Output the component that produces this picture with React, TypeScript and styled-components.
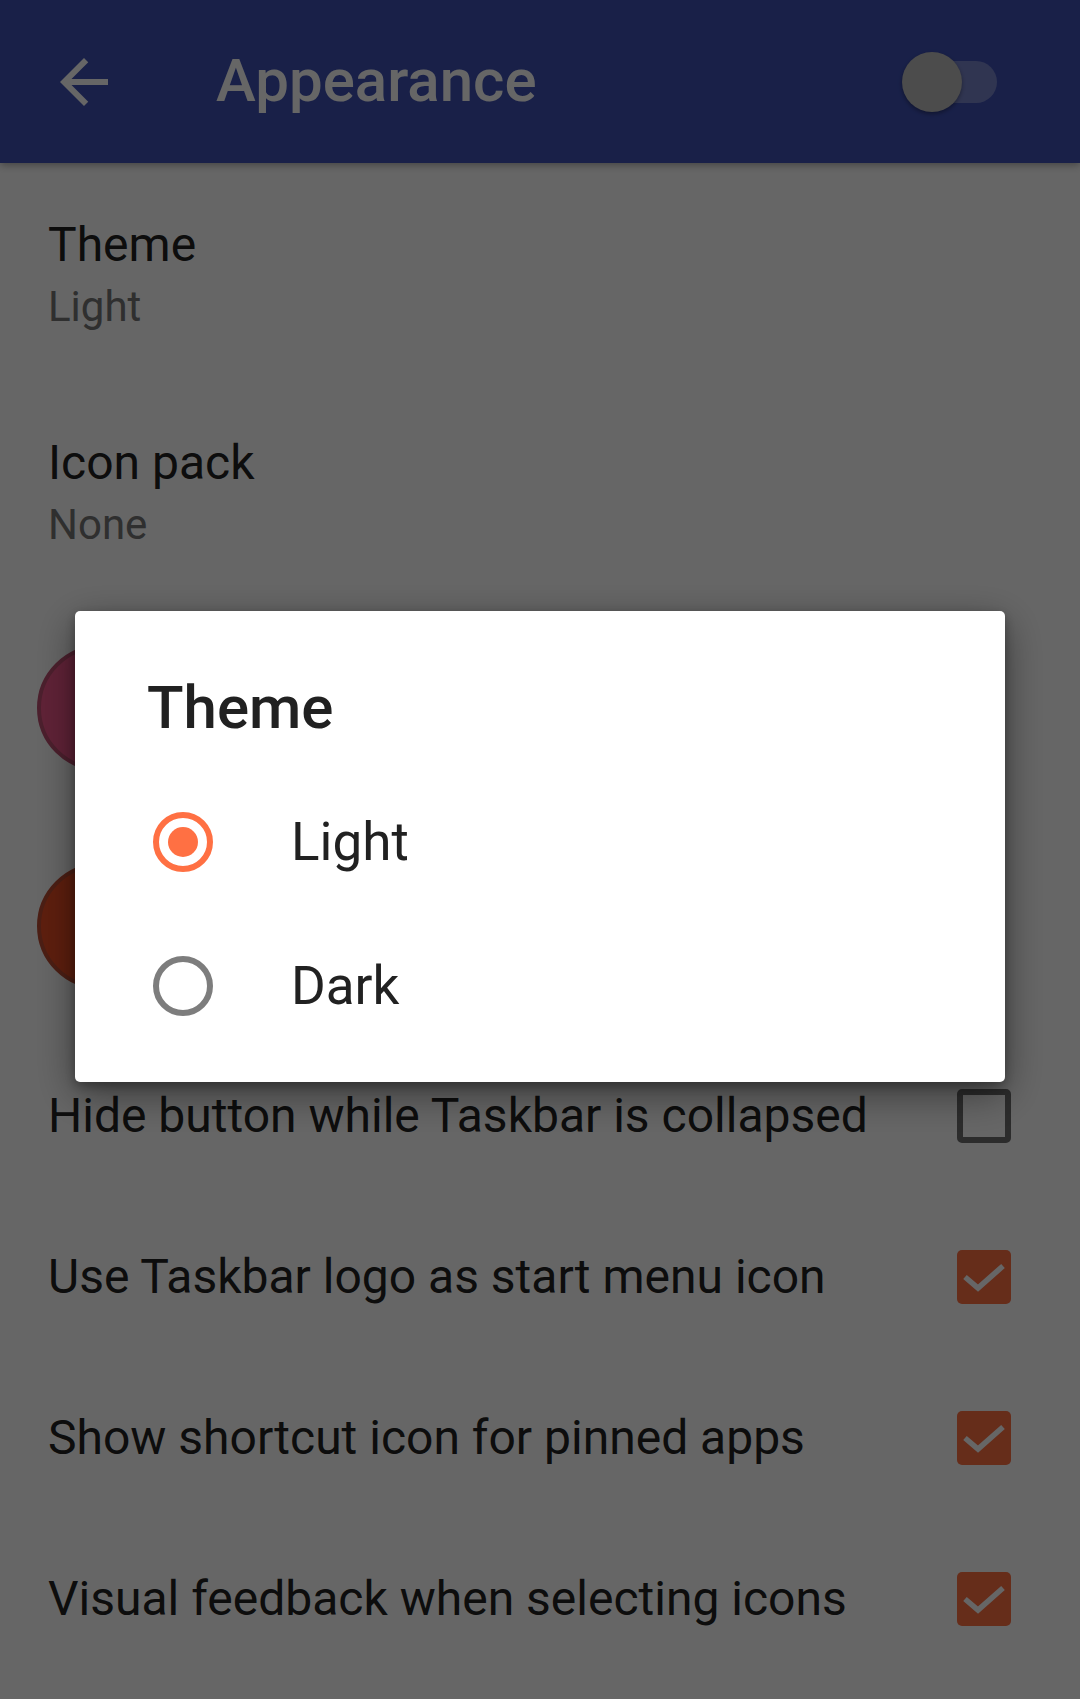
import React from "react";
import styled, { createGlobalStyle } from "styled-components";

const GlobalStyle = createGlobalStyle`
  html, body {
    margin: 0;
    padding: 0;
    background: #ffffff;
    font-family: Roboto, "Noto Sans", "Liberation Sans", sans-serif;
  }
  * { box-sizing: border-box; }
`;

const Screen = styled.div`
  position: relative;
  width: 1080px;
  min-height: 1699px;
  background: #ffffff;
  overflow: hidden;
`;

const Toolbar = styled.header`
  position: relative;
  z-index: 1;
  height: 163px;
  display: flex;
  align-items: center;
  padding: 0 83px 0 48px;
  background: #3f51b5;
  box-shadow: 0 2px 8px rgba(0, 0, 0, 0.35);
`;

const NavIcon = styled.svg`
  width: 72px;
  height: 72px;
  flex: none;
  fill: #ffffff;
`;

const ToolbarTitle = styled.h1`
  margin: 0 0 0 96px;
  font-size: 60px;
  font-weight: 500;
  color: #ffffff;
  line-height: 1.172;
`;

const SwitchWrap = styled.div`
  position: relative;
  margin-left: auto;
  width: 95px;
  height: 60px;
  display: flex;
  align-items: center;
  justify-content: flex-end;
`;

const SwitchTrack = styled.div`
  width: 87px;
  height: 42px;
  border-radius: 21px;
  background: #7985cb;
`;

const SwitchThumb = styled.div`
  position: absolute;
  left: 0;
  top: 0;
  width: 60px;
  height: 60px;
  border-radius: 50%;
  background: #bdbdbd;
  box-shadow: 0 2px 4px rgba(0, 0, 0, 0.35);
`;

const List = styled.main`
  display: flex;
  flex-direction: column;
`;

const TwoLineRow = styled.div`
  height: 218px;
  padding: 54px 48px 40px;
  display: flex;
  flex-direction: column;
`;

const PrefTitle = styled.div`
  font-size: 48px;
  line-height: 56px;
  color: #212121;
  white-space: nowrap;
`;

const PrefSummary = styled.div`
  font-size: 42px;
  line-height: 68px;
  color: #757575;
`;

const ColorRow = styled.div`
  height: 218px;
  padding: 0 48px 0 37px;
  display: flex;
  align-items: center;
`;

const ColorSwatch = styled.div<{ $fill: string; $ring: string }>`
  width: 126px;
  height: 126px;
  flex: none;
  border-radius: 50%;
  background: ${(p) => p.$fill};
  border: 4px solid ${(p) => p.$ring};
`;

const CheckRow = styled.div`
  height: 161px;
  padding: 0 69px 0 48px;
  display: flex;
  align-items: center;
  justify-content: space-between;
`;

const CheckBox = styled.div<{ $checked: boolean }>`
  width: 54px;
  height: 54px;
  flex: none;
  border-radius: 5px;
  display: flex;
  align-items: center;
  justify-content: center;
  background: ${(p) => (p.$checked ? "#ff7043" : "transparent")};
  border: ${(p) => (p.$checked ? "none" : "6px solid #6e6e6e")};
`;

const CheckMark = styled.svg`
  width: 54px;
  height: 54px;
  fill: none;
  stroke: #ffffff;
  stroke-width: 5.5;
`;

const Scrim = styled.div`
  position: fixed;
  inset: 0;
  z-index: 10;
  background: rgba(0, 0, 0, 0.6);
  display: flex;
  align-items: center;
  justify-content: center;
  padding-bottom: 6px;
`;

const Dialog = styled.div`
  width: 930px;
  height: 471px;
  background: #ffffff;
  border-radius: 5px;
  box-shadow: 0 12px 40px rgba(0, 0, 0, 0.45), 0 4px 12px rgba(0, 0, 0, 0.3);
  padding: 62px 0 24px;
  display: flex;
  flex-direction: column;
`;

const DialogTitle = styled.h2`
  margin: 0 0 27px;
  padding-left: 72px;
  font-size: 60px;
  font-weight: 500;
  line-height: 70px;
  color: #212121;
`;

const Option = styled.label`
  height: 144px;
  display: flex;
  align-items: center;
  padding-left: 78px;
  gap: 78px;
  cursor: pointer;
`;

const Radio = styled.span<{ $checked: boolean }>`
  position: relative;
  width: 60px;
  height: 60px;
  flex: none;
  border-radius: 50%;
  border: 6px solid ${(p) => (p.$checked ? "#ff7043" : "#7d7d7d")};
  &::after {
    content: "";
    position: absolute;
    left: 9px;
    top: 9px;
    width: 30px;
    height: 30px;
    border-radius: 50%;
    background: #ff7043;
    display: ${(p) => (p.$checked ? "block" : "none")};
  }
`;

const OptionLabel = styled.span`
  font-size: 53px;
  line-height: 62px;
  color: #212121;
`;

const checkRows = [
  { label: "Hide button while Taskbar is collapsed", checked: false },
  { label: "Use Taskbar logo as start menu icon", checked: true },
  { label: "Show shortcut icon for pinned apps", checked: true },
  { label: "Visual feedback when selecting icons", checked: true },
];

const colorRows = [
  { id: "tint", fill: "#f0578a", ring: "#be4f71" },
  { id: "accent", fill: "#eb4d24", ring: "#be4d33" },
];

export default function App() {
  return (
    <>
      <GlobalStyle />
      <Screen>
        <Toolbar>
          <NavIcon viewBox="0 0 24 24">
            <path d="M20 11H7.83l5.59-5.59L12 4l-8 8 8 8 1.41-1.41L7.83 13H20v-2z" />
          </NavIcon>
          <ToolbarTitle>Appearance</ToolbarTitle>
          <SwitchWrap>
            <SwitchTrack />
            <SwitchThumb />
          </SwitchWrap>
        </Toolbar>
        <List>
          <TwoLineRow>
            <PrefTitle>Theme</PrefTitle>
            <PrefSummary>Light</PrefSummary>
          </TwoLineRow>
          <TwoLineRow>
            <PrefTitle>Icon pack</PrefTitle>
            <PrefSummary>None</PrefSummary>
          </TwoLineRow>
          {colorRows.map((c) => (
            <ColorRow key={c.id}>
              <ColorSwatch $fill={c.fill} $ring={c.ring} />
            </ColorRow>
          ))}
          {checkRows.map((r) => (
            <CheckRow key={r.label}>
              <PrefTitle>{r.label}</PrefTitle>
              <CheckBox $checked={r.checked}>
                {r.checked && (
                  <CheckMark viewBox="0 0 54 54">
                    <polyline points="8,27 21,38 46,16" />
                  </CheckMark>
                )}
              </CheckBox>
            </CheckRow>
          ))}
        </List>
        <Scrim>
          <Dialog role="dialog">
            <DialogTitle>Theme</DialogTitle>
            <Option>
              <Radio $checked={true} />
              <OptionLabel>Light</OptionLabel>
            </Option>
            <Option>
              <Radio $checked={false} />
              <OptionLabel>Dark</OptionLabel>
            </Option>
          </Dialog>
        </Scrim>
      </Screen>
    </>
  );
}
